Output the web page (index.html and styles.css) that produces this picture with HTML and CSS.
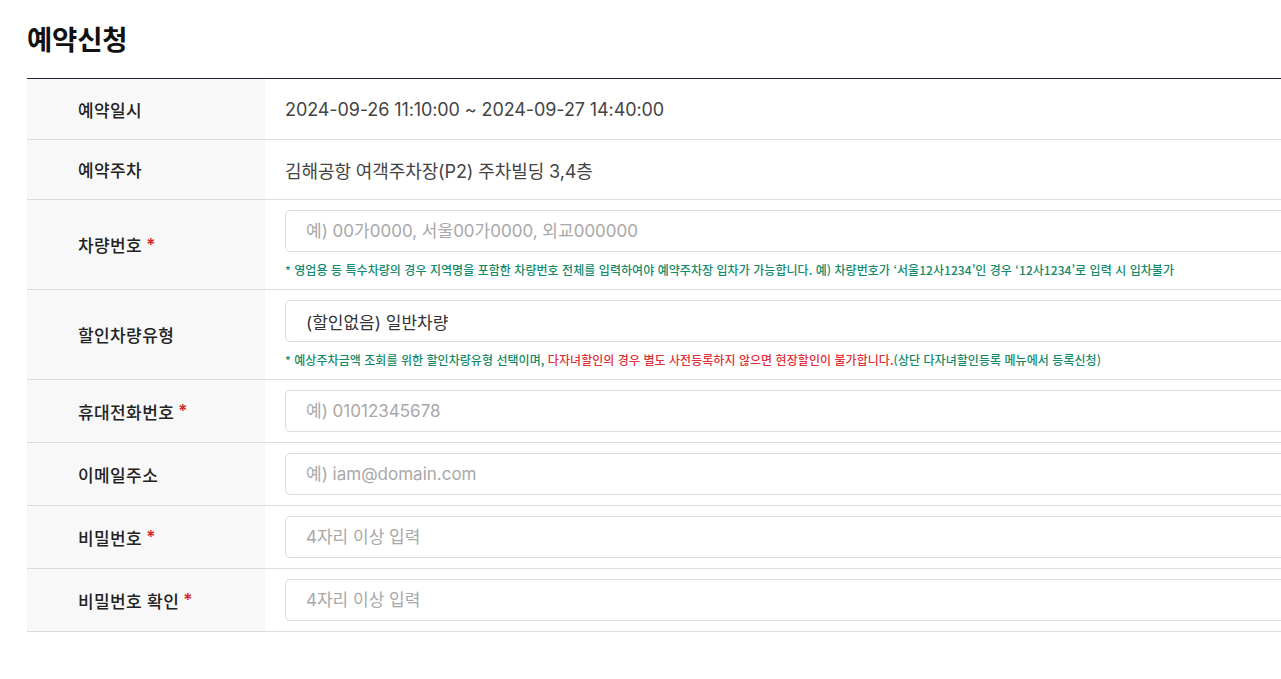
FILE: index.html
```html
<!DOCTYPE html>
<html lang="ko">
<head>
<meta charset="utf-8">
<title>예약신청</title>
<link rel="stylesheet" href="styles.css">
</head>
<body>
<div class="page">
  <h2 class="title">예약신청</h2>
  <div class="form">
    <div class="row">
      <div class="label">예약일시</div>
      <div class="value"><span class="text">2024-09-26 11:10:00 ~ 2024-09-27 14:40:00</span></div>
    </div>
    <div class="row">
      <div class="label">예약주차</div>
      <div class="value"><span class="text">김해공항 여객주차장(P2) 주차빌딩 3,4층</span></div>
    </div>
    <div class="row">
      <div class="label">차량번호 <span class="req">*</span></div>
      <div class="value">
        <input class="field" type="text" placeholder="예) 00가0000, 서울00가0000, 외교000000">
        <p class="note">* 영업용 등 특수차량의 경우 지역명을 포함한 차량번호 전체를 입력하여야 예약주차장 입차가 가능합니다. 예) 차량번호가 ‘서울12사1234’인 경우 ‘12사1234’로 입력 시 입차불가</p>
      </div>
    </div>
    <div class="row">
      <div class="label">할인차량유형</div>
      <div class="value">
        <div class="field select">(할인없음) 일반차량</div>
        <p class="note">* 예상주차금액 조회를 위한 할인차량유형 선택이며, <span class="warn">다자녀할인의 경우 별도 사전등록하지 않으면 현장할인이 불가합니다.</span>(상단 다자녀할인등록 메뉴에서 등록신청)</p>
      </div>
    </div>
    <div class="row">
      <div class="label">휴대전화번호 <span class="req">*</span></div>
      <div class="value"><input class="field" type="text" placeholder="예) 01012345678"></div>
    </div>
    <div class="row">
      <div class="label">이메일주소</div>
      <div class="value"><input class="field" type="text" placeholder="예) iam@domain.com"></div>
    </div>
    <div class="row">
      <div class="label">비밀번호 <span class="req">*</span></div>
      <div class="value"><input class="field" type="password" placeholder="4자리 이상 입력"></div>
    </div>
    <div class="row">
      <div class="label">비밀번호 확인 <span class="req">*</span></div>
      <div class="value"><input class="field" type="password" placeholder="4자리 이상 입력"></div>
    </div>
  </div>
</div>
</body>
</html>
```

FILE: styles.css
```css
html, body {
  margin: 0;
  padding: 0;
  background: #fff;
  overflow: hidden;
}
body {
  font-family: Inter, "Noto Sans CJK KR", sans-serif;
  color: #222;
}
.page {
  width: 1400px;
  padding: 22px 0 0 27px;
}
.title {
  margin: 0 0 20px;
  font-size: 27.5px;
  line-height: 36px;
  font-weight: 700;
  letter-spacing: -0.2px;
  color: #111;
}
.form {
  border-top: 1px solid #1d2638;
}
.row {
  display: flex;
  border-bottom: 1px solid #dcdcdc;
}
.row:nth-child(-n+2) {
  min-height: 59px;
}
.row:first-child {
  min-height: 60px;
}
.label {
  width: 238px;
  flex: none;
  background: #f8f8f8;
  padding-left: 51px;
  box-sizing: border-box;
  display: flex;
  align-items: center;
  gap: 4px;
  font-size: 17px;
  font-weight: 500;
  letter-spacing: 0.4px;
  color: #222;
}
.req {
  color: #d42a2a;
  font-weight: 600;
}
.value {
  flex: 1;
  padding: 10px 0 10px 20px;
  display: flex;
  flex-direction: column;
  justify-content: center;
}
.text {
  font-size: 18px;
  color: #444;
  letter-spacing: -0.1px;
}
.field {
  width: 100%;
  height: 42px;
  box-sizing: border-box;
  border: 1px solid #dcdcdc;
  border-radius: 5px;
  padding: 0 20px;
  font-family: inherit;
  font-size: 17px;
  color: #333;
  background: #fff;
  outline: none;
  letter-spacing: 0;
}
.field::placeholder {
  color: #a8a8a8;
}
.select {
  display: flex;
  align-items: center;
}
.note {
  margin: 9px 0 0;
  font-family: "Noto Sans CJK KR", sans-serif;
  font-size: 12px;
  line-height: 18px;
  font-weight: 500;
  letter-spacing: 0.05px;
  color: #138a6a;
}
.warn {
  color: #e0303a;
}
```
